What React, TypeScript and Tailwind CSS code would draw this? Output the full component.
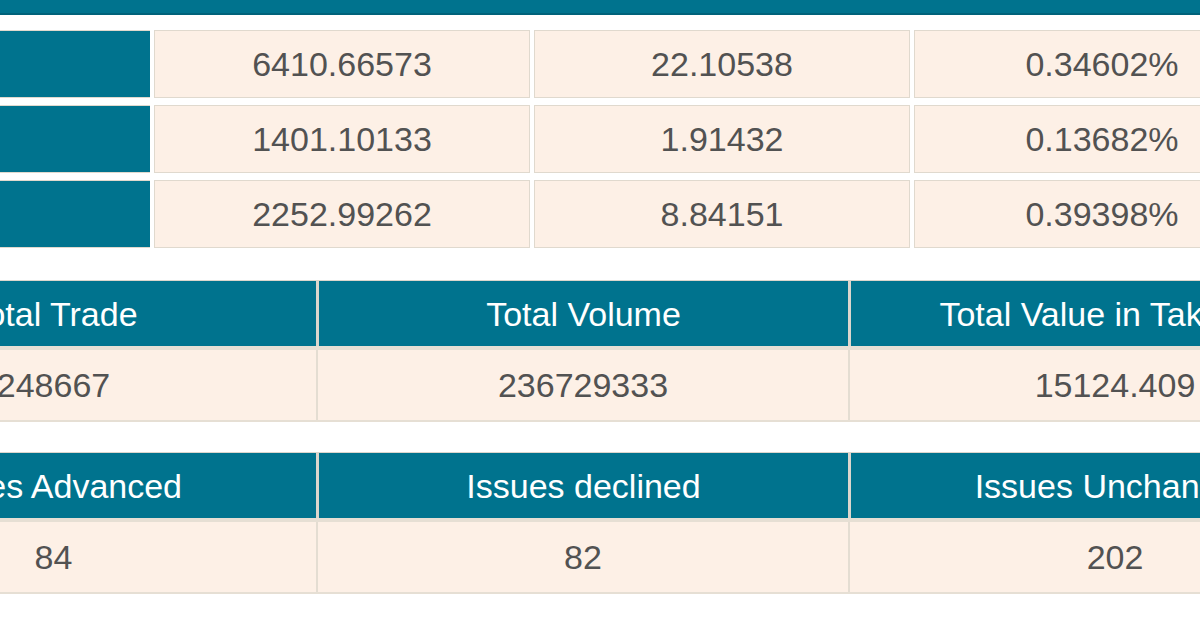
import React from "react";

const indexRows = [
  ["6410.66573", "22.10538", "0.34602%"],
  ["1401.10133", "1.91432", "0.13682%"],
  ["2252.99262", "8.84151", "0.39398%"],
];

const summaries = [
  {
    heads: ["Total Trade", "Total Volume", "Total Value in Taka(mn)"],
    values: ["248667", "236729333", "15124.409"],
  },
  {
    heads: ["Issues Advanced", "Issues declined", "Issues Unchanged"],
    values: ["84", "82", "202"],
  },
];

function SummaryTable({ heads, values }: { heads: string[]; values: string[] }) {
  const widths = ["w-[525px]", "w-[532px]", "w-[532px]"];
  return (
    <div className="-ml-[209px] w-max">
      <div className="flex h-[66px] border-t border-[#dcd6cd] bg-[#00738e]">
        {heads.map((h, i) => (
          <div
            key={h}
            className={`${widths[i]} shrink-0 flex items-center justify-center text-white ${
              i > 0 ? "border-l-[3px] border-[#dcd6cd]" : ""
            }`}
          >
            {h}
          </div>
        ))}
      </div>
      <div className="flex h-[76px] border-t-[4px] border-b-2 border-[#e6dfd4] bg-[#fdf0e6]">
        {values.map((v, i) => (
          <div
            key={i}
            className={`${widths[i]} shrink-0 flex items-center justify-center text-[#525252] ${
              i > 0 ? "border-l-[2px] border-[#e4ddd2]" : ""
            }`}
          >
            {v}
          </div>
        ))}
      </div>
    </div>
  );
}

export default function App() {
  return (
    <div className="w-[1200px] h-[625px] overflow-hidden bg-white font-['Liberation_Sans',Arial,sans-serif] text-[34px] leading-none">
      <div className="h-[15px] bg-[#00738e] border-b-2 border-[#00627a]" />

      <div className="mt-[15px] -ml-[226px] flex flex-col gap-[7px] w-max">
        {indexRows.map((row, r) => (
          <div key={r} className="flex h-[68px]">
            <div className="w-[376px] shrink-0 bg-[#00738e] border-y border-[#e0d9ce]" />
            {row.map((cell, i) => (
              <div
                key={i}
                className="ml-[4px] w-[376px] shrink-0 flex items-center justify-center bg-[#fdf0e6] border border-[#e0d9ce] text-[#525252]"
              >
                {cell}
              </div>
            ))}
          </div>
        ))}
      </div>

      <div className="mt-[32px]">
        <SummaryTable {...summaries[0]} />
      </div>
      <div className="mt-[30px]">
        <SummaryTable {...summaries[1]} />
      </div>
    </div>
  );
}
